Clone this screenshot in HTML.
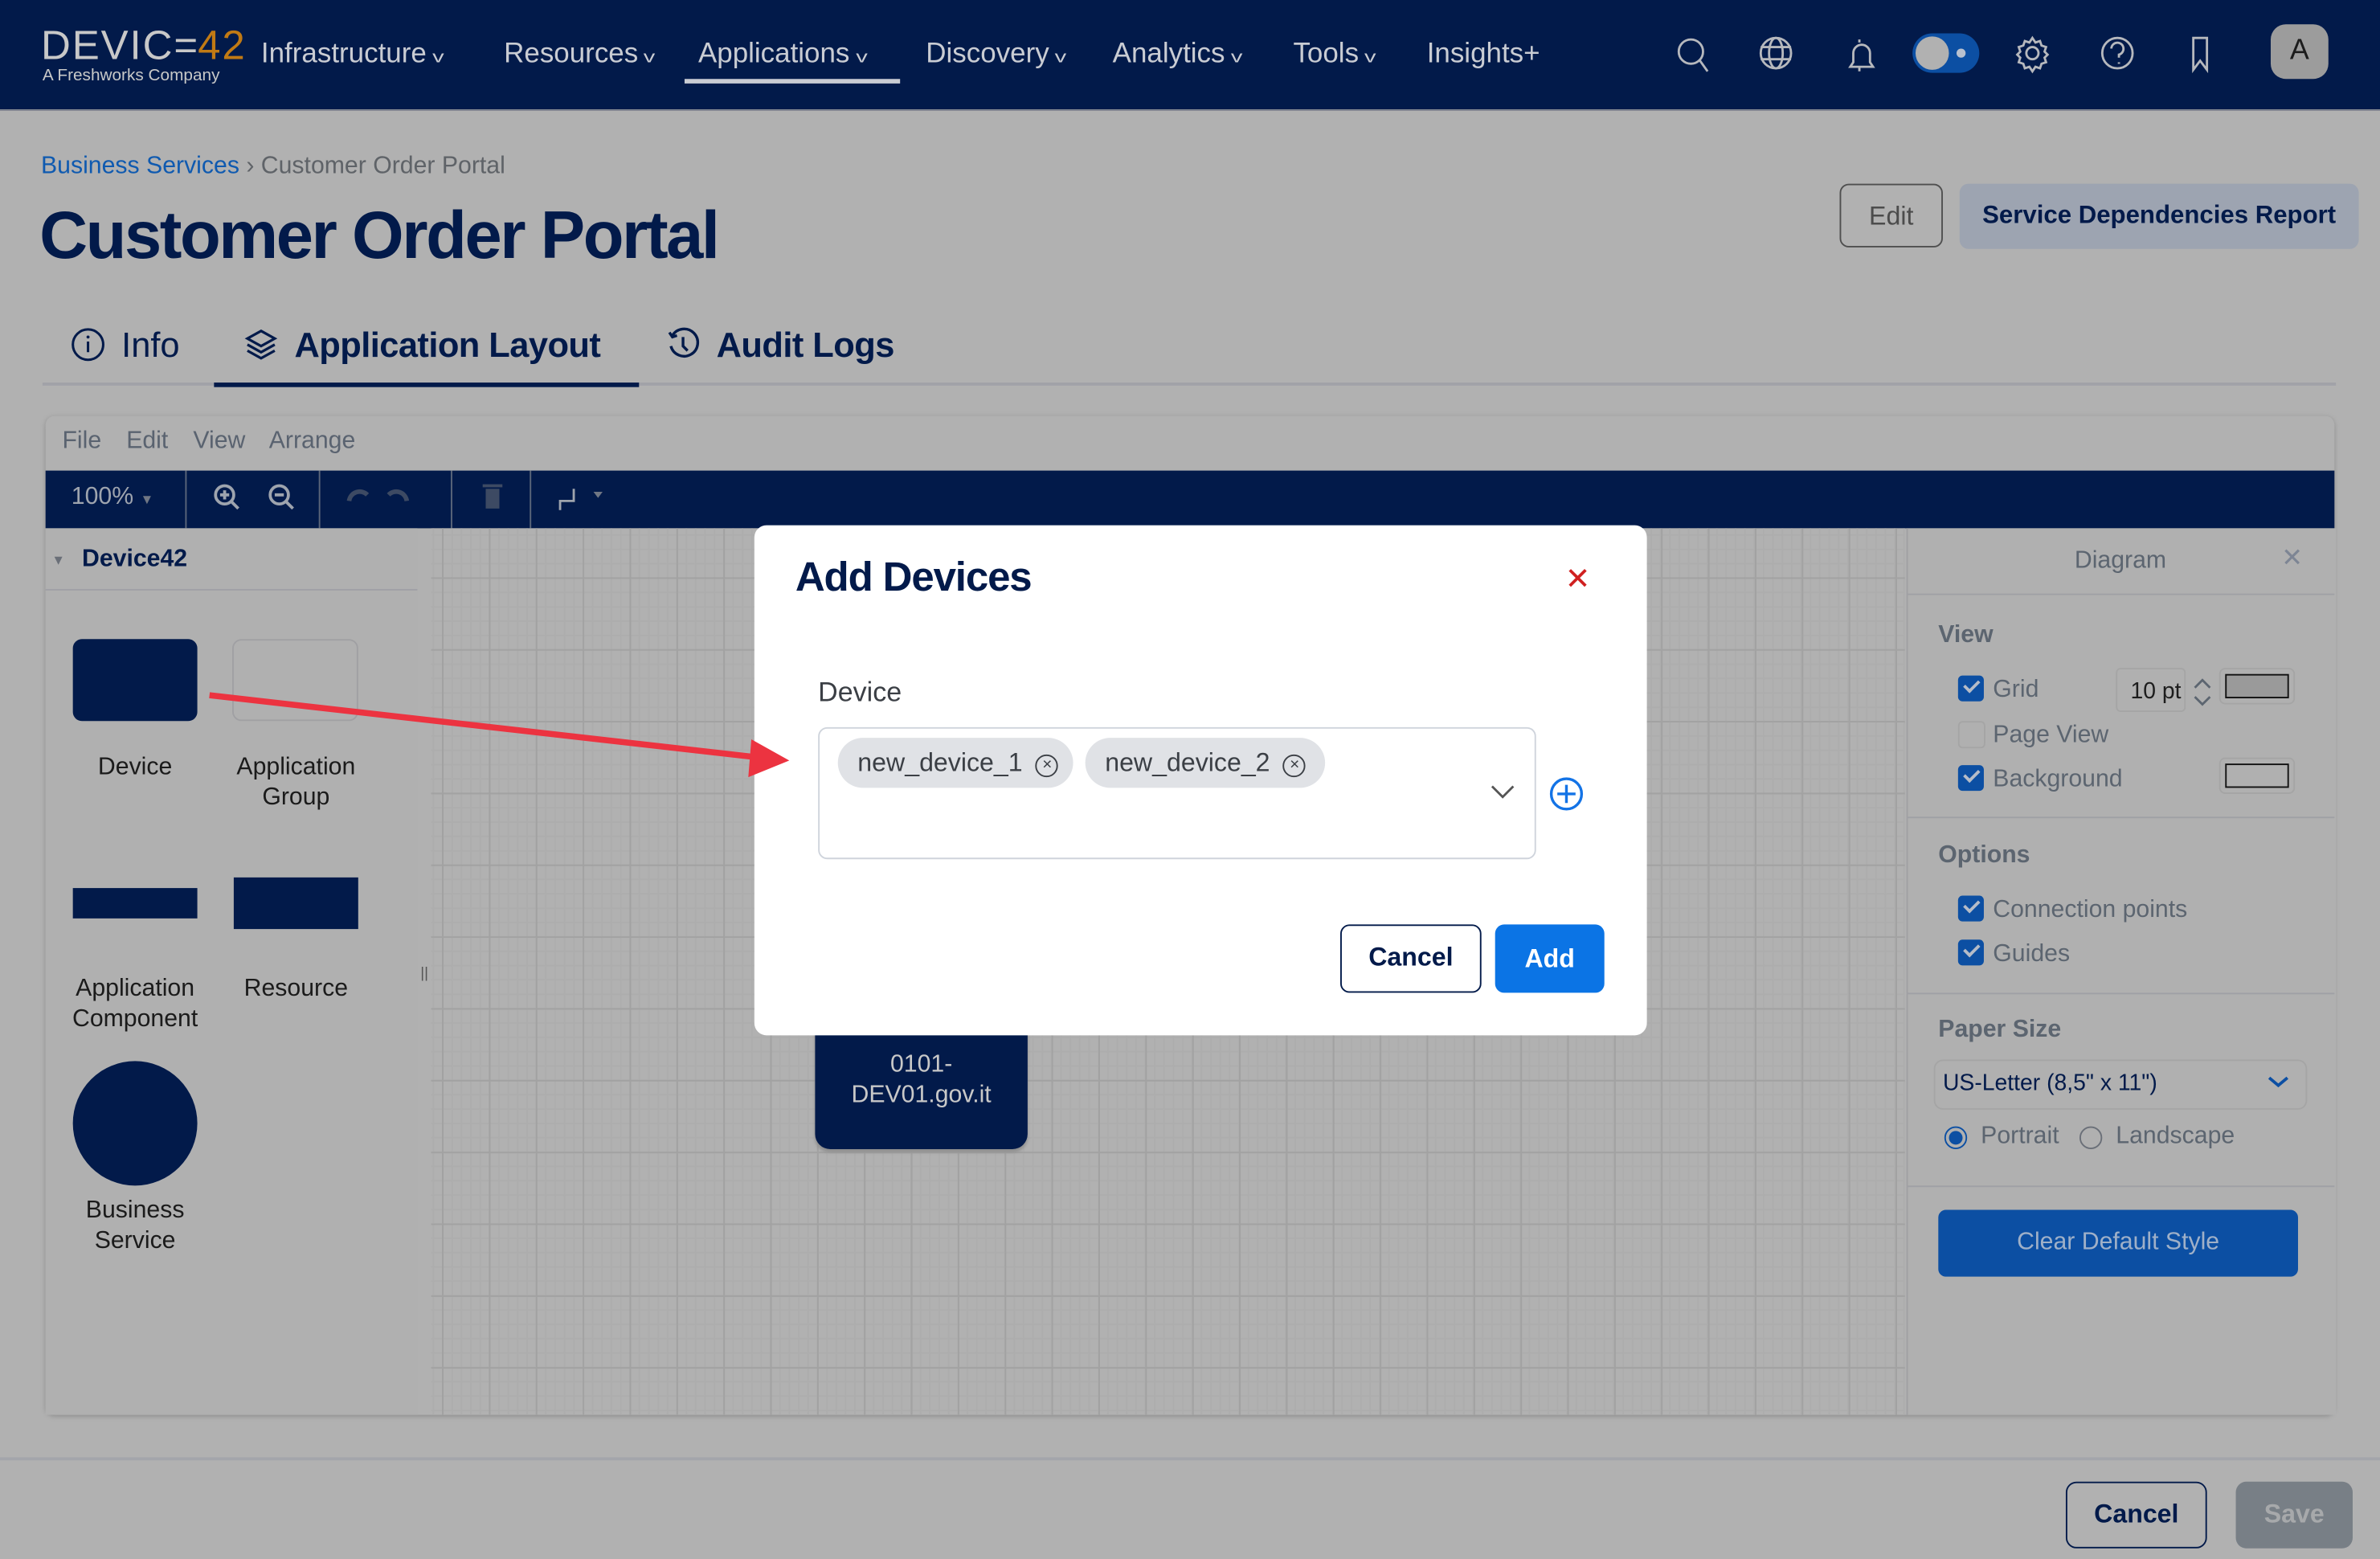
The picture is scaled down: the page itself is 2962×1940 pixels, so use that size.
<!DOCTYPE html>
<html><head><meta charset="utf-8">
<style>
html,body{margin:0;padding:0;width:2962px;height:1940px;overflow:hidden;background:#b1b1b1;}
#w{position:absolute;left:0;top:0;width:1568px;height:1027px;transform:scale(1.88903);transform-origin:0 0;font-family:"Liberation Sans",sans-serif;background:#b1b1b1;}
.a{position:absolute;}
.nav{left:0;top:0;width:1568px;height:72px;background:#021a4a;border-bottom:1px solid #8a8d96;}
.ni{color:#c9ccd3;font-size:18.5px;top:24px;}
.ni .c{font-size:11px;margin-left:5px;display:inline-block;transform:scaleX(1.4);}
.ic{stroke:#b6b8bd;fill:none;stroke-width:1.5;}
.sb{font-size:16px;color:#1b1b1b;text-align:center;line-height:20px;}
.rp{font-size:16px;color:#5c6570;}
.cb{width:17px;height:17px;border-radius:3px;background:#0c4fa3;}
.cb:after{content:"";position:absolute;left:4px;top:3px;width:8px;height:4px;border-left:2px solid #b5bcc8;border-bottom:2px solid #b5bcc8;transform:rotate(-45deg);}
.x{display:inline-block;width:13px;height:13px;border:1.3px solid #3b3f45;border-radius:50%;font-size:11px;line-height:12px;text-align:center;vertical-align:1px;margin-left:4px}
</style></head><body>
<div id="w">
<div class="a nav"></div>
<div class="a" style="left:27px;top:15px;font-size:27px;color:#c8c8c8;letter-spacing:1px;line-height:30px;">DEVIC<span style="letter-spacing:0">=</span><span style="color:#c17a14">42</span></div>
<div class="a" style="left:28px;top:44px;font-size:11px;color:#c8c8c8;">A Freshworks Company</div>
<div class="a ni" style="left:172px;">Infrastructure<span class="c">v</span></div>
<div class="a ni" style="left:332px;">Resources<span class="c">v</span></div>
<div class="a ni" style="left:460px;">Applications<span class="c">v</span></div>
<div class="a" style="left:451px;top:52px;width:142px;height:3px;background:#c9ccd3"></div>
<div class="a ni" style="left:610px;">Discovery<span class="c">v</span></div>
<div class="a ni" style="left:733px;">Analytics<span class="c">v</span></div>
<div class="a ni" style="left:852px;">Tools<span class="c">v</span></div>
<div class="a ni" style="left:940px;">Insights+</div>
<svg class="a" style="left:1100px;top:20px" width="440" height="34" viewBox="0 0 440 34">
<g class="ic">
<circle cx="14" cy="14" r="8"/><line x1="20" y1="20" x2="25" y2="27"/>
<circle cx="70" cy="15" r="10"/><ellipse cx="70" cy="15" rx="4.5" ry="10"/><line x1="60" y1="11" x2="80" y2="11"/><line x1="60" y1="19" x2="80" y2="19"/>
<path d="M119 24 h15 l-2-3 v-6 a5.5 5.5 0 0 0-11 0 v6 z M125 24 v3 M125 6 v2"/>
<circle cx="239" cy="15" r="4"/><path d="M239 5 l2 3 3-1 1 3 3 1-1 3 2 2-2 2 1 3-3 1-1 3-3-1-2 3-2-3-3 1-1-3-3-1 1-3-2-2 2-2-1-3 3-1 1-3 3 1z"/>
<circle cx="295" cy="15" r="10"/><path d="M291 12 a4 4 0 1 1 5 4 v2 M296 21 v1"/>
<path d="M345 5 h9 v21 l-4.5-6 -4.5 6z"/>
</g>
<rect x="160" y="2" width="44" height="26" rx="13" fill="#0c4fa3"/>
<circle cx="173" cy="15" r="11" fill="#b1b1b1"/><circle cx="192" cy="15" r="3" fill="#b9c1cf"/>
</svg>
<div class="a" style="left:1496px;top:16px;width:38px;height:36px;border-radius:10px;background:#9c9c9c;color:#1c1c1c;font-size:19px;text-align:center;line-height:36px;">A</div>

<div class="a" style="left:27px;top:101px;font-size:16px;color:#5f6368;"><span style="color:#0f5ab0">Business Services</span> › Customer Order Portal</div>
<div class="a" style="left:26px;top:131px;font-size:44px;font-weight:bold;color:#021a4a;letter-spacing:-1.3px;">Customer Order Portal</div>
<div class="a" style="left:1212px;top:121px;width:68px;height:42px;border:1.5px solid #4f4f4f;border-radius:6px;color:#4c4c4c;font-size:17px;text-align:center;line-height:42px;box-sizing:border-box;">Edit</div>
<div class="a" style="left:1291px;top:121px;width:263px;height:43px;background:#9da4b1;border-radius:6px;color:#021a4a;font-size:16.5px;text-align:center;line-height:43px;font-weight:bold;">Service Dependencies Report</div>
<svg class="a" style="left:46px;top:215px" width="24" height="24"><circle cx="12" cy="12" r="10" stroke="#021a4a" stroke-width="1.6" fill="none"/><line x1="12" y1="10" x2="12" y2="17" stroke="#021a4a" stroke-width="1.6"/><circle cx="12" cy="7" r="1" fill="#021a4a"/></svg>
<div class="a" style="left:80px;top:214px;font-size:23px;color:#021a4a;">Info</div>
<svg class="a" style="left:160px;top:215px" width="24" height="24"><path d="M12 3 l9 5 -9 5 -9-5z M3 12 l9 5 9-5 M3 16 l9 5 9-5" stroke="#021a4a" stroke-width="1.7" fill="none"/></svg>
<div class="a" style="left:194px;top:214px;font-size:23px;color:#021a4a;font-weight:bold;letter-spacing:-0.3px;">Application Layout</div>
<svg class="a" style="left:438px;top:215px" width="24" height="24"><path d="M5 6 a9 9 0 1 1 -1 7 M3 4 l2 3 3-1 M12 7 v6 l3 3" stroke="#021a4a" stroke-width="1.8" fill="none"/></svg>
<div class="a" style="left:472px;top:214px;font-size:23px;color:#021a4a;font-weight:bold;letter-spacing:-0.3px;">Audit Logs</div>
<div class="a" style="left:28px;top:252px;width:1511px;height:2px;background:#a1a2a8"></div>
<div class="a" style="left:141px;top:252px;width:280px;height:3px;background:#021a4a"></div>

<div class="a" style="left:30px;top:274px;width:1508px;height:658px;border-radius:6px;box-shadow:0 1px 3px #8e8e8e;background:#b1b1b1;"></div>
<div class="a" style="left:41px;top:282px;font-size:16px;color:#5a6370;word-spacing:12px;">File Edit View Arrange</div>
<div class="a" style="left:30px;top:310px;width:1508px;height:38px;background:#021a4a;"></div>
<div class="a" style="left:47px;top:319px;font-size:16px;color:#9ea4ae;">100% <span style="font-size:9px;color:#707784">▼</span></div>
<div class="a" style="left:122px;top:310px;width:1px;height:38px;background:#5b667a"></div>
<div class="a" style="left:210px;top:310px;width:1px;height:38px;background:#5b667a"></div>
<div class="a" style="left:297px;top:310px;width:1px;height:38px;background:#5b667a"></div>
<div class="a" style="left:349px;top:310px;width:1px;height:38px;background:#5b667a"></div>
<svg class="a" style="left:138px;top:316px" width="270" height="26">
<g stroke="#9ea4ae" stroke-width="2" fill="none"><circle cx="10" cy="10" r="6"/><line x1="14" y1="14" x2="19" y2="19"/><line x1="7" y1="10" x2="13" y2="10"/><line x1="10" y1="7" x2="10" y2="13"/>
<circle cx="46" cy="10" r="6"/><line x1="50" y1="14" x2="55" y2="19"/><line x1="43" y1="10" x2="49" y2="10"/></g>
<path d="M92 14 a7 7 0 0 1 12-4 M130 14 a7 7 0 0 0-12-4" stroke="#3d4a63" stroke-width="3" fill="none"/>
<rect x="182" y="6" width="9" height="13" fill="#3d4a63"/><rect x="180" y="3" width="13" height="2" fill="#3d4a63"/>
<path d="M231 20 v-6 h9 v-8" stroke="#9ea4ae" stroke-width="1.5" fill="none"/><path d="M253 8 l6 0 -3 4z" fill="#707784"/>
</svg>
<div class="a" style="left:30px;top:348px;width:245px;height:584px;background:#b0b0b0;"></div>
<div class="a" style="left:34px;top:364px;font-size:9px;color:#6a6f78;">▼</div>
<div class="a" style="left:54px;top:360px;font-size:16px;font-weight:bold;color:#021a4a;">Device42</div>
<div class="a" style="left:30px;top:388px;width:245px;height:1px;background:#9fa0a5"></div>
<div class="a" style="left:48px;top:421px;width:82px;height:54px;border-radius:6px;background:#021a4a;"></div>
<div class="a" style="left:153px;top:421px;width:83px;height:54px;border-radius:6px;border:1px solid #a0a0a3;box-sizing:border-box"></div>
<div class="a sb" style="left:40px;top:496px;width:98px;">Device</div>
<div class="a sb" style="left:145px;top:496px;width:100px;">Application Group</div>
<div class="a" style="left:48px;top:585px;width:82px;height:20px;background:#021a4a;"></div>
<div class="a" style="left:154px;top:578px;width:82px;height:34px;background:#021a4a;"></div>
<div class="a sb" style="left:35px;top:642px;width:108px;">Application Component</div>
<div class="a sb" style="left:145px;top:642px;width:100px;">Resource</div>
<div class="a" style="left:48px;top:699px;width:82px;height:82px;border-radius:50%;background:#021a4a;"></div>
<div class="a sb" style="left:40px;top:788px;width:98px;">Business Service</div>
<div class="a" style="left:277px;top:636px;font-size:10px;color:#555;">||</div>
<div class="a" style="left:284px;top:348px;width:971px;height:584px;background-color:#b1b1b1;
background-image:linear-gradient(90deg,#a2a2a2 1px,transparent 1px),linear-gradient(#a2a2a2 1px,transparent 1px),linear-gradient(90deg,#adadad 1px,transparent 1px),linear-gradient(#adadad 1px,transparent 1px);
background-size:30.9px 47.3px,30.9px 47.3px,6.18px 9.46px,6.18px 9.46px;background-position:7.2px 32.3px,7.2px 32.3px,7.2px 32.3px,7.2px 32.3px;"></div>
<div class="a" style="left:537px;top:660px;width:140px;height:97px;border-radius:10px;background:#021a4a;box-shadow:0 2px 2px #909090;"></div>
<div class="a" style="left:537px;top:692px;width:140px;text-align:center;color:#c8c8c8;font-size:16px;line-height:20px;">0101-<br>DEV01.gov.it</div>
<div class="a" style="left:1256px;top:348px;width:282px;height:584px;background:#b0b0b0;border-left:1px solid #a0a0a3;"></div>
<div class="a" style="left:1256px;top:361px;width:282px;text-align:center;font-size:16px;color:#5c6570;">Diagram</div>
<div class="a" style="left:1503px;top:358px;font-size:17px;color:#7d8594;">✕</div>
<div class="a" style="left:1257px;top:391px;width:281px;height:1px;background:#9fa0a5"></div>
<div class="a rp" style="left:1277px;top:410px;font-weight:bold;">View</div>
<div class="a cb" style="left:1290px;top:445px;"></div><div class="a rp" style="left:1313px;top:446px;">Grid</div>
<div class="a" style="left:1394px;top:440px;width:46px;height:29px;border:1px solid #a5a5a5;border-radius:3px;box-sizing:border-box;font-size:15px;color:#1d1d1d;text-align:right;line-height:29px;padding-right:2px;">10 pt</div>
<svg class="a" style="left:1444px;top:446px" width="14" height="20"><path d="M2 7 l5-5 5 5 M2 13 l5 5 5-5" stroke="#5c6570" stroke-width="1.5" fill="none"/></svg>
<div class="a" style="left:1462px;top:440px;width:50px;height:24px;border:1px solid #a5a5a5;border-radius:4px;box-sizing:border-box;padding:3px;"><div style="width:100%;height:100%;border:1px solid #111;background:#9a9a9a;box-sizing:border-box"></div></div>
<div class="a" style="left:1290px;top:475px;width:16px;height:16px;border:1px solid #a5a5a5;border-radius:3px;"></div><div class="a rp" style="left:1313px;top:476px;">Page View</div>
<div class="a cb" style="left:1290px;top:504px;"></div><div class="a rp" style="left:1313px;top:505px;">Background</div>
<div class="a" style="left:1462px;top:499px;width:50px;height:24px;border:1px solid #a5a5a5;border-radius:4px;box-sizing:border-box;padding:3px;"><div style="width:100%;height:100%;border:1px solid #111;box-sizing:border-box"></div></div>
<div class="a" style="left:1257px;top:538px;width:281px;height:1px;background:#9fa0a5"></div>
<div class="a rp" style="left:1277px;top:555px;font-weight:bold;">Options</div>
<div class="a cb" style="left:1290px;top:590px;"></div><div class="a rp" style="left:1313px;top:591px;">Connection points</div>
<div class="a cb" style="left:1290px;top:619px;"></div><div class="a rp" style="left:1313px;top:620px;">Guides</div>
<div class="a" style="left:1257px;top:654px;width:281px;height:1px;background:#9fa0a5"></div>
<div class="a rp" style="left:1277px;top:670px;font-weight:bold;">Paper Size</div>
<div class="a" style="left:1274px;top:698px;width:246px;height:33px;border:1px solid #a5a5a5;border-radius:6px;box-sizing:border-box;"></div>
<div class="a" style="left:1280px;top:705px;font-size:15px;color:#021a4a;">US-Letter (8,5" x 11")</div>
<svg class="a" style="left:1493px;top:708px" width="16" height="10"><path d="M2 2 l6 5 6-5" stroke="#0c4fa3" stroke-width="2" fill="none"/></svg>
<div class="a" style="left:1281px;top:742px;width:15px;height:15px;border:1.5px solid #0c4fa3;border-radius:50%;box-sizing:border-box;padding:2px;"><div style="width:100%;height:100%;border-radius:50%;background:#0c4fa3"></div></div>
<div class="a rp" style="left:1305px;top:740px;">Portrait</div>
<div class="a" style="left:1370px;top:742px;width:15px;height:15px;border:1px solid #6a6f78;border-radius:50%;box-sizing:border-box;"></div>
<div class="a rp" style="left:1394px;top:740px;">Landscape</div>
<div class="a" style="left:1257px;top:781px;width:281px;height:1px;background:#9fa0a5"></div>
<div class="a" style="left:1277px;top:797px;width:237px;height:44px;border-radius:5px;background:#0c4fa3;color:#9fb0c8;font-size:16px;text-align:center;line-height:44px;">Clear Default Style</div>

<div class="a" style="left:0;top:960px;width:1568px;height:2px;background:#a3a5ab"></div>
<div class="a" style="left:1361px;top:976px;width:93px;height:44px;border:1.5px solid #021a4a;border-radius:7px;box-sizing:border-box;color:#021a4a;font-size:17px;font-weight:bold;text-align:center;line-height:41px;">Cancel</div>
<div class="a" style="left:1473px;top:976px;width:77px;height:44px;border-radius:7px;background:#787f86;color:#a7a9ab;font-size:17px;font-weight:bold;text-align:center;line-height:44px;">Save</div>

<div class="a" style="left:497px;top:346px;width:588px;height:336px;background:#fff;border-radius:8px;"></div>
<div class="a" style="left:524px;top:365px;font-size:27px;font-weight:bold;color:#021a4a;letter-spacing:-0.6px;">Add Devices</div>
<div class="a" style="left:1031px;top:369px;font-size:20px;color:#d02020;">✕</div>
<div class="a" style="left:539px;top:446px;font-size:18px;color:#3b3f45;">Device</div>
<div class="a" style="left:539px;top:479px;width:473px;height:87px;border:1px solid #cfd4dc;border-radius:6px;box-sizing:border-box;"></div>
<div class="a" style="left:552px;top:486px;width:155px;height:33px;border-radius:17px;background:#e0e2e6;font-size:17px;color:#3b3f45;line-height:33px;padding-left:13px;box-sizing:border-box;">new_device_1 <span class="x">×</span></div>
<div class="a" style="left:715px;top:486px;width:158px;height:33px;border-radius:17px;background:#e0e2e6;font-size:17px;color:#3b3f45;line-height:33px;padding-left:13px;box-sizing:border-box;">new_device_2 <span class="x">×</span></div>
<svg class="a" style="left:980px;top:512px" width="70" height="24"><path d="M3 6 l7 7 7-7" stroke="#555" stroke-width="1.5" fill="none"/><circle cx="52" cy="11" r="10" stroke="#1373e6" stroke-width="1.8" fill="none"/><path d="M52 5 v12 M46 11 h12" stroke="#1373e6" stroke-width="1.8"/></svg>
<div class="a" style="left:883px;top:609px;width:93px;height:45px;border:1.5px solid #021a4a;border-radius:6px;box-sizing:border-box;color:#021a4a;font-size:17px;font-weight:bold;text-align:center;line-height:42px;">Cancel</div>
<div class="a" style="left:985px;top:609px;width:72px;height:45px;border-radius:6px;background:#0b74e5;color:#fff;font-size:17px;font-weight:bold;text-align:center;line-height:45px;">Add</div>

<svg class="a" style="left:0;top:0" width="1568" height="1027"><line x1="138" y1="458" x2="500" y2="499" stroke="#ec3340" stroke-width="4"/><path d="M520 501 L495 487 L493 512 z" fill="#ec3340"/></svg>
</div>
</body></html>
